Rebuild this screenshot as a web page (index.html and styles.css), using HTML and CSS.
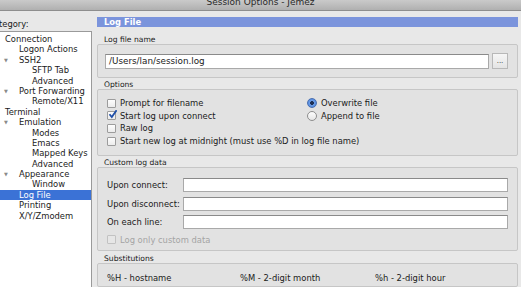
FILE: index.html
```html
<!DOCTYPE html>
<html>
<head>
<meta charset="utf-8">
<link rel="stylesheet" href="styles.css">
</head>
<body>
<div class="window">
  <div class="titlebar"><span class="title">Session Options - Jemez</span></div>
  <div class="content">
    <div class="sidebar">
      <div class="cat-label">Category:</div>
      <div class="tree">
        <div class="row l0">Connection</div>
        <div class="row l1">Logon Actions</div>
        <div class="row l1"><span class="tri">&#9660;</span>SSH2</div>
        <div class="row l2">SFTP Tab</div>
        <div class="row l2">Advanced</div>
        <div class="row l1"><span class="tri">&#9660;</span>Port Forwarding</div>
        <div class="row l2">Remote/X11</div>
        <div class="row l0">Terminal</div>
        <div class="row l1"><span class="tri">&#9660;</span>Emulation</div>
        <div class="row l2">Modes</div>
        <div class="row l2">Emacs</div>
        <div class="row l2">Mapped Keys</div>
        <div class="row l2">Advanced</div>
        <div class="row l1"><span class="tri">&#9660;</span>Appearance</div>
        <div class="row l2">Window</div>
        <div class="row l1 selected">Log File</div>
        <div class="row l1">Printing</div>
        <div class="row l1">X/Y/Zmodem</div>
      </div>
    </div>
    <div class="main">
      <div class="header">Log File</div>

      <div class="group-label first">Log file name</div>
      <div class="box box-file">
        <div class="field field-path">/Users/lan/session.log</div>
        <div class="btn">...</div>
      </div>

      <div class="group-label">Options</div>
      <div class="box box-options">
        <div class="opt"><span class="cb"></span>Prompt for filename</div>
        <div class="opt"><span class="radio on"></span>Overwrite file</div>
        <div class="opt"><span class="cb checked"><svg viewBox="0 0 9 9" width="9" height="9"><path d="M1.5 4.2 L3.8 7 L8.6 0.2" fill="none" stroke="#1f4fa8" stroke-width="1.8"/></svg></span>Start log upon connect</div>
        <div class="opt"><span class="radio"></span>Append to file</div>
        <div class="opt"><span class="cb"></span>Raw log</div>
        <div class="opt"></div>
        <div class="opt span2"><span class="cb"></span>Start new log at midnight (must use %D in log file name)</div>
      </div>

      <div class="group-label custom">Custom log data</div>
      <div class="box box-custom">
        <div class="crow"><span class="clabel">Upon connect:</span><div class="field"></div></div>
        <div class="crow"><span class="clabel">Upon disconnect:</span><div class="field"></div></div>
        <div class="crow"><span class="clabel">On each line:</span><div class="field"></div></div>
        <div class="opt disabled"><span class="cb"></span>Log only custom data</div>
      </div>

      <div class="group-label subst">Substitutions</div>
      <div class="box box-subst">
        <span class="sub">%H - hostname</span>
        <span class="sub">%M - 2-digit month</span>
        <span class="sub">%h - 2-digit hour</span>
      </div>
    </div>
  </div>
</div>
</body>
</html>
```

FILE: styles.css
```css
html, body {
  margin: 0;
  padding: 0;
  width: 521px;
  height: 287px;
  overflow: hidden;
  background: #e8e8e8;
}
.window {
  font-family: "DejaVu Sans", "Liberation Sans", sans-serif;
  font-size: 8.4px;
  color: #1a1a1a;
  height: 287px;
  overflow: hidden;
}
.titlebar {
  height: 10px;
  overflow: hidden;
  background: linear-gradient(#cacaca, #b0b0b0);
  border-bottom: 1px solid #8e8e8e;
  text-align: center;
}
.title {
  display: block;
  font-size: 9px;
  line-height: 10px;
  margin-top: -3px;
  color: #2a2a2a;
}
.content {
  display: flex;
  gap: 5px;
  height: 276px;
}
.sidebar {
  width: 92px;
  flex: none;
  display: flex;
  flex-direction: column;
}
.cat-label {
  margin-top: 8px;
  height: 11px;
  line-height: 11px;
  text-indent: -12px;
  white-space: nowrap;
}
.tree {
  margin-top: 1px;
  flex: 1;
  background: #fff;
  border-right: 1px solid #9a9a9a;
  border-top: 1px solid #9a9a9a;
  padding-top: 2px;
}
.row {
  height: 10.4px;
  line-height: 10.4px;
  white-space: nowrap;
  position: relative;
}
.l0 { padding-left: 5px; }
.l1 { padding-left: 19px; }
.l2 { padding-left: 32px; }
.tri {
  position: absolute;
  left: 4px;
  top: 0;
  font-size: 5px;
  color: #8a8a8a;
}
.selected {
  background: #3b72d6;
  color: #fff;
}
.main {
  flex: 1;
  margin-right: 6px;
  display: flex;
  flex-direction: column;
}
.header {
  margin-top: 6px;
  height: 10px;
  line-height: 10px;
  background: #7b94dc;
  color: #fff;
  font-weight: bold;
  padding-left: 7px;
  flex: none;
}
.group-label {
  height: 9px;
  line-height: 9px;
  padding-left: 7px;
  font-size: 7.6px;
  margin-top: 2px;
  flex: none;
}
.group-label.first { margin-top: 8px; }
.group-label.custom { margin-top: 2px; }
.group-label.subst { margin-top: 3px; }
.box {
  background: #e2e2e2;
  border: 1px solid #c6c6c6;
  border-radius: 2px;
  flex: none;
}
.box-file {
  height: 32px;
  display: flex;
  align-items: center;
  padding: 0 9px 0 7px;
  gap: 3px;
}
.field {
  height: 13px;
  background: #fff;
  border: 1px solid #a9a9a9;
  border-top-color: #8a8a8a;
  box-sizing: border-box;
  flex: 1;
}
.field-path {
  height: 15px;
  line-height: 13px;
  padding-left: 3px;
  font-size: 8.8px;
}
.btn {
  width: 16px;
  height: 16px;
  box-sizing: border-box;
  border: 1px solid #b8b8b8;
  background: linear-gradient(#f6f6f6, #e4e4e4);
  text-align: center;
  font-size: 7px;
  line-height: 14px;
  color: #333;
}
.box-options {
  height: 67px;
  box-sizing: border-box;
  padding: 7px 9px 0 9px;
  display: grid;
  grid-template-columns: 200px 1fr;
  grid-auto-rows: 12.6px;
}
.opt {
  display: flex;
  align-items: center;
  gap: 4px;
  white-space: nowrap;
  height: 12.6px;
}
.span2 { grid-column: 1 / 3; }
.cb {
  width: 9px;
  height: 9px;
  box-sizing: border-box;
  border: 1px solid #9c9c9c;
  background: linear-gradient(#fdfdfd, #ececec);
  border-radius: 1px;
  flex: none;
  position: relative;
}
.cb svg {
  position: absolute;
  left: 0;
  top: -2px;
}
.radio {
  width: 10px;
  height: 10px;
  box-sizing: border-box;
  border: 1px solid #8e8e8e;
  border-radius: 50%;
  background: linear-gradient(#fdfdfd, #e6e6e6);
  flex: none;
}
.radio.on {
  background: radial-gradient(circle, #1d2f55 0 1.6px, #6fa0e8 2.2px, #3d79d6 100%);
  border-color: #4a6fb0;
}
.box-custom {
  height: 84px;
  box-sizing: border-box;
  padding: 10px 9px 0 9px;
  display: flex;
  flex-direction: column;
  gap: 4.5px;
}
.crow {
  display: flex;
  align-items: center;
  height: 14px;
  flex: none;
}
.clabel {
  width: 76px;
  flex: none;
  white-space: nowrap;
}
.crow .field { height: 14px; }
.disabled { color: #a4a4a4; flex: none; }
.disabled .cb { border-color: #c2c2c2; background: #e6e6e6; }
.box-subst {
  flex: 1;
  display: flex;
  padding: 9px 9px 0 9px;
  white-space: nowrap;
}
.sub { width: 133px; flex: none; }
.sub:nth-child(2) { width: 135px; }
```
